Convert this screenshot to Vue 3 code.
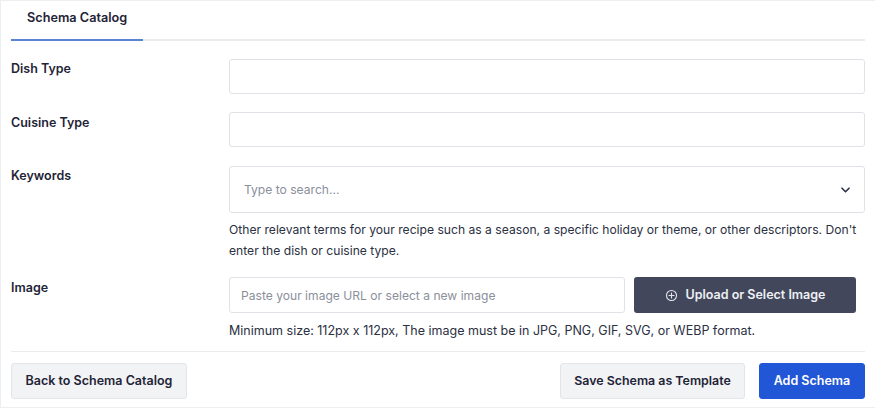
<script setup>
const fields = [
  { label: 'Dish Type' },
  { label: 'Cuisine Type' },
]
</script>

<template>
  <div class="page">
    <nav class="tabs">
      <div class="tab">Schema Catalog</div>
    </nav>
    <div class="form">
      <div v-for="f in fields" :key="f.label" class="row plain">
        <div class="label">{{ f.label }}</div>
        <div class="box text-box"></div>
      </div>
      <div class="row keywords">
        <div class="label">Keywords</div>
        <div class="control">
          <div class="box select">
            <span class="placeholder">Type to search...</span>
            <svg class="chev" width="9" height="6" viewBox="0 0 9 6" fill="none">
              <path d="M1 1.2 4.5 4.7 8 1.2" stroke="#2b3046" stroke-width="1.6" stroke-linecap="round" stroke-linejoin="round" />
            </svg>
          </div>
          <p class="help help-keywords">Other relevant terms for your recipe such as a season, a specific holiday or theme, or other descriptors. Don't enter the dish or cuisine type.</p>
        </div>
      </div>
      <div class="row image">
        <div class="label">Image</div>
        <div class="control">
          <div class="image-line">
            <div class="box url"><span class="placeholder">Paste your image URL or select a new image</span></div>
            <button class="btn upload" type="button">
              <svg width="13" height="13" viewBox="0 0 13 13" fill="none">
                <circle cx="6.5" cy="6.5" r="5" stroke="#e6e7ec" stroke-width="1.1" />
                <path d="M6.5 4v5M4 6.5h5" stroke="#e6e7ec" stroke-width="1.1" stroke-linecap="round" />
              </svg>
              <span>Upload or Select Image</span>
            </button>
          </div>
          <p class="help help-image">Minimum size: 112px x 112px, The image must be in JPG, PNG, GIF, SVG, or WEBP format.</p>
        </div>
      </div>
    </div>
    <footer class="footer">
      <button class="btn light back" type="button">Back to Schema Catalog</button>
      <div class="right">
        <button class="btn light save" type="button">Save Schema as Template</button>
        <button class="btn primary" type="button">Add Schema</button>
      </div>
    </footer>
  </div>
</template>

<style>
html, body { margin: 0; background: #fff; }
</style>

<style scoped>
.page {
  box-sizing: border-box;
  width: 875px;
  height: 408px;
  padding: 0 10px 0 11px;
  background: #fff;
  border-top: 1px solid #eceef1;
  border-bottom: 1px solid #eceef1;
  box-shadow: inset 1px 0 0 #eceef1;
  font-family: Inter, "Liberation Sans", sans-serif;
  color: #1f2437;
  display: flex;
  flex-direction: column;
}
.tabs {
  height: 40px;
  box-sizing: border-box;
  border-bottom: 2px solid #e9ebef;
  flex: none;
}
.tab {
  box-sizing: border-box;
  width: 132px;
  height: 40px;
  padding: 9px 0 0 16px;
  border-bottom: 2px solid #5c82d4;
  font-size: 12.7px;
  line-height: 16px;
  font-weight: 600;
}
.form { flex: none; }
.row {
  display: grid;
  grid-template-columns: 218px 636px;
}
.plain:first-child { margin-top: 18px; }
.plain { margin-bottom: 18px; }
.label {
  font-size: 12.5px;
  line-height: 16px;
  font-weight: 600;
  padding-top: 2px;
}
.plain + .plain .label { padding-top: 3px; }
.box {
  box-sizing: border-box;
  background: #fff;
  border: 1px solid #dfe2e7;
  border-radius: 3px;
}
.text-box { height: 35px; }
.keywords { margin-top: 19px; }
.keywords .label { padding-top: 2px; }
.select {
  height: 47px;
  padding: 0 14px 0 14px;
  display: flex;
  align-items: center;
  justify-content: space-between;
}
.placeholder {
  font-size: 12.1px;
  color: #8b8f9b;
  white-space: nowrap;
}
.help {
  margin: 0;
  font-size: 12.13px;
  line-height: 21px;
  color: #2b3042;
}
.help-keywords { margin-top: 6px; }
.image { margin-top: 16px; }
.image .label { padding-top: 3px; }
.image-line {
  display: flex;
  justify-content: space-between;
  width: 627px;
}
.url {
  width: 396px;
  height: 36px;
  padding: 0 11px;
  display: flex;
  align-items: center;
}
.btn {
  box-sizing: border-box;
  height: 36px;
  border-radius: 3px;
  font-family: inherit;
  font-size: 12.5px;
  font-weight: 600;
  line-height: 16px;
  cursor: pointer;
  white-space: nowrap;
}
.upload {
  width: 222px;
  border: 0;
  background: #43475c;
  color: #eef0f4;
  display: flex;
  align-items: center;
  justify-content: center;
  gap: 8px;
}
.help-image { margin-top: 7px; font-size: 12.5px; }
.footer {
  margin-top: 10px;
  padding-top: 11px;
  border-top: 1px solid #e9ebef;
  display: flex;
  justify-content: space-between;
}
.right { display: flex; gap: 14px; }
.light {
  background: #f2f3f5;
  border: 1px solid #e3e5e9;
  color: #1f2437;
  padding: 0 14px;
}
.back { width: 176px; padding: 0; }
.save { width: 185px; padding: 0; font-size: 12.4px; }
.primary {
  background: #2156d6;
  border: 1px solid #2156d6;
  color: #fff;
  width: 106px;
  padding: 0;
}
</style>
